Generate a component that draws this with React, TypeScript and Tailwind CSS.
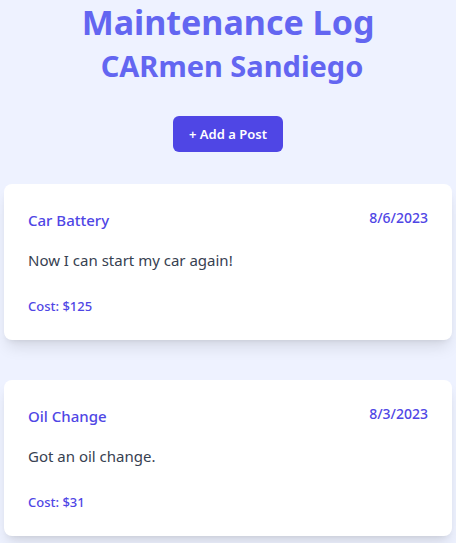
import React from "react";

type Post = { title: string; date: string; body: string; cost: number };

const posts: Post[] = [
  { title: "Car Battery", date: "8/6/2023", body: "Now I can start my car again!", cost: 125 },
  { title: "Oil Change", date: "8/3/2023", body: "Got an oil change.", cost: 31 },
];

function PostCard({ post }: { post: Post }) {
  return (
    <div className="rounded-lg bg-white p-6 shadow-lg">
      <div className="flex items-start justify-between">
        <h3 className="text-[15px] leading-6 font-medium text-[#4f46e5]">{post.title}</h3>
        <span className="text-sm font-medium text-[#4f46e5]">{post.date}</span>
      </div>
      <p className="mt-4 text-[15px] leading-6 text-[#374151]">{post.body}</p>
      <p className="mt-6 text-[13px] leading-5 font-medium text-[#4f46e5]">Cost: ${post.cost}</p>
    </div>
  );
}

export default function App() {
  return (
    <div className="min-h-screen bg-[#eef2ff] px-1 pt-0.5 font-['Noto_Sans',sans-serif]">
      <header className="text-center">
        <h1 className="text-[34px] leading-10 font-bold text-[#6366f1]">Maintenance Log</h1>
        <h2 className="mt-1.5 pl-2 text-[29px] leading-9 font-bold text-[#6366f1]">CARmen Sandiego</h2>
        <button className="mt-8 rounded-md bg-[#4f46e5] px-4 py-2 text-[13px] leading-5 font-semibold text-white">
          + Add a Post
        </button>
      </header>
      <div className="mt-8 flex flex-col gap-10 pb-10">
        {posts.map((p) => (
          <PostCard key={p.title} post={p} />
        ))}
      </div>
    </div>
  );
}
